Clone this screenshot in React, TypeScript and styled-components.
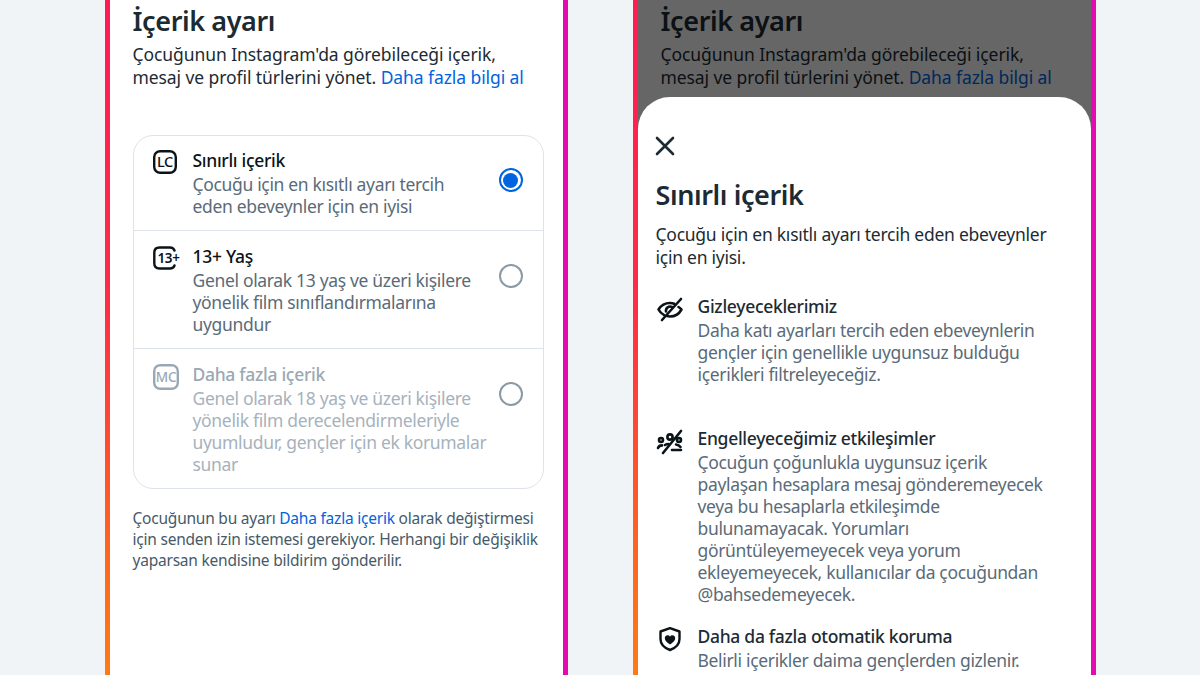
import React from 'react';
import styled, { createGlobalStyle } from 'styled-components';

const GlobalStyle = createGlobalStyle`
  html, body {
    margin: 0;
    padding: 0;
    background: #f1f4f7;
  }
  body {
    font-family: 'Noto Sans', 'Inter', sans-serif;
    color: #1c2b33;
  }
`;

const Page = styled.div`
  width: 1200px;
  height: 675px;
  overflow: hidden;
  display: flex;
  justify-content: center;
  gap: 65px;
`;

const Phone = styled.div`
  position: relative;
  width: 463px;
  height: 675px;
  overflow: hidden;
  display: flex;
`;

const LeftRail = styled.div`
  width: 5px;
  flex: none;
  background: linear-gradient(180deg, #ff1a55 0%, #ff2d45 45%, #ff6a1c 85%, #ff7a14 100%);
`;

const RightRail = styled.div`
  width: 5px;
  flex: none;
  background: #e40cb0;
`;

const Screen = styled.div`
  flex: 1;
  min-width: 0;
  background: #fff;
  padding: 3px 19px 0 23px;
`;

const Title = styled.h1`
  margin: 0;
  font-size: 27px;
  line-height: 36px;
  font-weight: 600;
  letter-spacing: -0.4px;
  color: #1c2b33;
`;

const Lead = styled.p`
  margin: 4px 0 0;
  font-size: 17.5px;
  line-height: 23px;
  letter-spacing: -0.08px;
  color: #1c2b33;
  white-space: nowrap;
`;

const TextLink = styled.a`
  color: #0064e0;
`;

const Card = styled.div`
  margin-top: 46px;
  border: 1px solid #dee3e9;
  border-radius: 20px;
`;

const Row = styled.div<{ $muted?: boolean }>`
  display: grid;
  grid-template-columns: 24px minmax(0, 1fr) 24px;
  column-gap: 16px;
  padding: 13px 20px 13px 19px;
  color: ${({ $muted }) => ($muted ? '#9aa8b4' : '#0a1317')};

  & + & {
    border-top: 1px solid #dee3e9;
    padding-top: 14px;
  }
`;

const RowIcon = styled.div`
  padding-top: 1px;
  line-height: 0;
`;

const RowTitle = styled.div`
  font-size: 17.5px;
  line-height: 22px;
  font-weight: 500;
  letter-spacing: -0.3px;
  color: inherit;
  white-space: nowrap;
`;

const RowText = styled.div<{ $muted?: boolean }>`
  margin-top: 2px;
  font-size: 17.5px;
  line-height: 22px;
  letter-spacing: -0.33px;
  color: ${({ $muted }) => ($muted ? '#a6b2bd' : '#5a6b78')};
  white-space: nowrap;
`;

const Radio = styled.div<{ $on?: boolean }>`
  margin-top: 19px;
  width: 24px;
  height: 24px;
  box-sizing: border-box;
  border-radius: 50%;
  border: 2.5px solid ${({ $on }) => ($on ? '#0064e0' : '#8a9aa6')};
  display: flex;
  align-items: center;
  justify-content: center;

  &::after {
    content: '';
    display: ${({ $on }) => ($on ? 'block' : 'none')};
    width: 15px;
    height: 15px;
    border-radius: 50%;
    background: #0064e0;
  }
`;

const Note = styled.p`
  margin: 19px 0 0;
  font-size: 15.5px;
  line-height: 21px;
  letter-spacing: -0.22px;
  color: #465a69;
  white-space: nowrap;
`;

const Scrim = styled.div`
  position: absolute;
  inset: 0 5px;
  background: rgba(0, 0, 0, 0.6);
`;

const Sheet = styled.div`
  position: absolute;
  top: 97px;
  left: 5px;
  right: 5px;
  height: 640px;
  background: #fff;
  border-radius: 32px 32px 0 0;
  padding: 37px 18px 0;
`;

const CloseButton = styled.div`
  width: 24px;
  height: 24px;
  margin-left: -3px;
  color: #1c2b33;
`;

const SheetTitle = styled.h2`
  margin: 19px 0 0;
  font-size: 27px;
  line-height: 36px;
  font-weight: 600;
  letter-spacing: -0.4px;
  color: #1c2b33;
`;

const SheetLead = styled.p`
  margin: 10px 0 0;
  font-size: 17.5px;
  line-height: 23px;
  letter-spacing: -0.25px;
  color: #1c2b33;
  white-space: nowrap;
`;

const Section = styled.div<{ $spaced?: boolean }>`
  display: grid;
  grid-template-columns: 28px minmax(0, 1fr);
  column-gap: 14px;
  margin-top: 20px;
  padding-bottom: ${({ $spaced }) => ($spaced ? '22px' : '0')};
`;

const SectionList = styled.div`
  margin-top: 26px;

  & > :first-child {
    margin-top: 0;
  }
`;

const SectionIcon = styled.div`
  color: #0a1317;
`;

const LcIcon = () => (
  <svg width="24" height="24" viewBox="0 0 24 24" fill="none">
    <rect x="1.200" y="1.200" width="21.600" height="21.600" rx="6" stroke="currentColor" strokeWidth="2.400" />
    <text x="12" y="17.300" textAnchor="middle" fontSize="14.500" fontWeight="500" letterSpacing="-0.3" fontFamily="Noto Sans" fill="currentColor">LC</text>
  </svg>
);

const McIcon = () => (
  <svg width="26" height="26" viewBox="0 0 26 26" fill="none">
    <rect x="1.200" y="1.200" width="23.600" height="23.600" rx="6" stroke="currentColor" strokeWidth="2.400" />
    <text x="13" y="18" textAnchor="middle" fontSize="13.500" fontWeight="500" letterSpacing="-0.3" fontFamily="Noto Sans" fill="currentColor">MC</text>
  </svg>
);

const ThirteenIcon = () => (
  <svg width="28" height="24" viewBox="0 0 28 24" fill="none">
    <path d="M21.500 4.500C20.800 2.500 19.500 1.500 17 1.500H6.500C3.300 1.500 1.300 3.500 1.300 6.700v10.600c0 3.200 2 5.200 5.200 5.200H17c2.500 0 3.800-1 4.500-3" stroke="currentColor" strokeWidth="2.400" strokeLinecap="round" />
    <text x="4.500" y="17" fontSize="13.500" fontWeight="600" letterSpacing="-0.4" fontFamily="Noto Sans" fill="currentColor">13+</text>
  </svg>
);

const CloseIcon = () => (
  <svg width="24" height="24" viewBox="0 0 24 24" fill="none" stroke="currentColor" strokeWidth="2.600" strokeLinecap="round">
    <path d="M4 4l16 16M20 4L4 20" />
  </svg>
);

const EyeOffIcon = () => (
  <svg width="28" height="28" viewBox="0 0 28 28" fill="none" stroke="currentColor" strokeWidth="2.600" strokeLinecap="round" strokeLinejoin="round">
    <path d="M6 25L25 4" />
    <path d="M8 20C5.500 18.500 3.500 16.500 2.500 14.500 5 10.500 9.500 8 14 8c1.500 0 3 .3 4.300.8" />
    <path d="M22.500 12c1.300.8 2.300 1.700 3 2.500-2.500 4.500-7 7-11.500 7-1 0-2-.1-3-.4" />
    <path d="M10 16.500c-.5-3.500 3-6 6-4.500" />
  </svg>
);

const BlockedIcon = () => (
  <svg width="28" height="28" viewBox="0 0 28 28" fill="none" stroke="currentColor" strokeWidth="2.600" strokeLinecap="round">
    <path d="M7 26L25 4" />
    <circle cx="5" cy="13" r="2" />
    <circle cx="14" cy="10" r="2.600" />
    <circle cx="23" cy="13" r="2" />
    <path d="M2 21c.6-1.600 2-2.600 4-2.600M9 18c1.200-.8 2.200-1 3.500-1M20 17.500c1.800.2 3.400 1 4.500 2.500M16 23h9" />
  </svg>
);

const ShieldHeartIcon = () => (
  <svg width="28" height="28" viewBox="0 0 28 28" fill="none">
    <path d="M14 3.200L23.500 6.500V14c0 5.500-4 9-9.500 11C8.500 23 4.500 19.500 4.500 14V6.500z" stroke="currentColor" strokeWidth="2.400" strokeLinejoin="round" />
    <path d="M14 19.500c-3-2-5.200-4-5.200-6.300 0-1.700 1.300-2.900 2.800-2.900 1 0 1.900.5 2.400 1.400.5-.9 1.400-1.400 2.400-1.400 1.500 0 2.800 1.200 2.800 2.900 0 2.300-2.200 4.300-5.200 6.300z" fill="currentColor" />
  </svg>
);

const Intro = () => (
  <>
    <Title>İçerik ayarı</Title>
    <Lead>
      Çocuğunun Instagram'da görebileceği içerik,<br />
      mesaj ve profil türlerini yönet. <TextLink>Daha fazla bilgi al</TextLink>
    </Lead>
  </>
);

const App: React.FC = () => {
  return (
    <>
      <GlobalStyle />
      <Page>
        <Phone>
          <LeftRail />
          <Screen>
            <Intro />
            <Card>
              <Row>
                <RowIcon><LcIcon /></RowIcon>
                <div>
                  <RowTitle>Sınırlı içerik</RowTitle>
                  <RowText>
                    Çocuğu için en kısıtlı ayarı tercih<br />
                    eden ebeveynler için en iyisi
                  </RowText>
                </div>
                <Radio $on />
              </Row>
              <Row>
                <RowIcon><ThirteenIcon /></RowIcon>
                <div>
                  <RowTitle>13+ Yaş</RowTitle>
                  <RowText>
                    Genel olarak 13 yaş ve üzeri kişilere<br />
                    yönelik film sınıflandırmalarına<br />
                    uygundur
                  </RowText>
                </div>
                <Radio />
              </Row>
              <Row $muted>
                <RowIcon><McIcon /></RowIcon>
                <div>
                  <RowTitle>Daha fazla içerik</RowTitle>
                  <RowText $muted>
                    Genel olarak 18 yaş ve üzeri kişilere<br />
                    yönelik film derecelendirmeleriyle<br />
                    uyumludur, gençler için ek korumalar<br />
                    sunar
                  </RowText>
                </div>
                <Radio />
              </Row>
            </Card>
            <Note>
              Çocuğunun bu ayarı <TextLink>Daha fazla içerik</TextLink> olarak değiştirmesi<br />
              için senden izin istemesi gerekiyor. Herhangi bir değişiklik<br />
              yaparsan kendisine bildirim gönderilir.
            </Note>
          </Screen>
          <RightRail />
        </Phone>
        <Phone>
          <LeftRail />
          <Screen>
            <Intro />
          </Screen>
          <RightRail />
          <Scrim />
          <Sheet>
            <CloseButton><CloseIcon /></CloseButton>
            <SheetTitle>Sınırlı içerik</SheetTitle>
            <SheetLead>
              Çocuğu için en kısıtlı ayarı tercih eden ebeveynler<br />
              için en iyisi.
            </SheetLead>
            <SectionList>
              <Section $spaced>
                <SectionIcon><EyeOffIcon /></SectionIcon>
                <div>
                  <RowTitle>Gizleyeceklerimiz</RowTitle>
                  <RowText>
                    Daha katı ayarları tercih eden ebeveynlerin<br />
                    gençler için genellikle uygunsuz bulduğu<br />
                    içerikleri filtreleyeceğiz.
                  </RowText>
                </div>
              </Section>
              <Section>
                <SectionIcon><BlockedIcon /></SectionIcon>
                <div>
                  <RowTitle>Engelleyeceğimiz etkileşimler</RowTitle>
                  <RowText>
                    Çocuğun çoğunlukla uygunsuz içerik<br />
                    paylaşan hesaplara mesaj gönderemeyecek<br />
                    veya bu hesaplarla etkileşimde<br />
                    bulunamayacak. Yorumları<br />
                    görüntüleyemeyecek veya yorum<br />
                    ekleyemeyecek, kullanıcılar da çocuğundan<br />
                    @bahsedemeyecek.
                  </RowText>
                </div>
              </Section>
              <Section>
                <SectionIcon><ShieldHeartIcon /></SectionIcon>
                <div>
                  <RowTitle>Daha da fazla otomatik koruma</RowTitle>
                  <RowText>Belirli içerikler daima gençlerden gizlenir.</RowText>
                </div>
              </Section>
            </SectionList>
          </Sheet>
        </Phone>
      </Page>
    </>
  );
};

export default App;
